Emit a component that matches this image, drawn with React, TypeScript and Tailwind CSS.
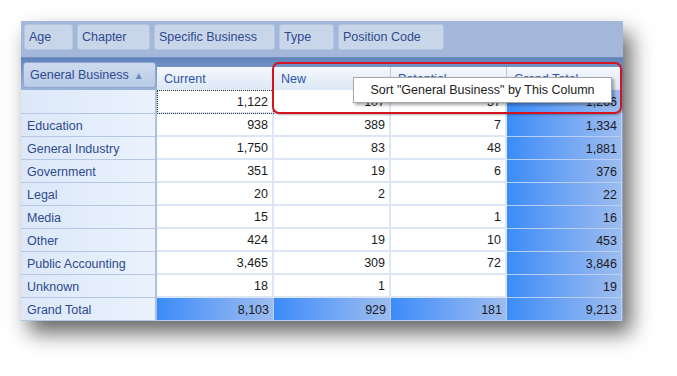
const FIELDS = ['Age', 'Chapter', 'Specific Business', 'Type', 'Position Code'];
const FIELD_W = ['w-[49px]', 'w-[73px]', 'w-[121px]', 'w-[55px]', 'w-[106px]'];

const COLS = ['Current', 'New', 'Potential', 'Grand Total'];
const COL_W = ['w-[117px]', 'w-[117px]', 'w-[116px]', 'w-[115px]'];

const ROWS: string[][] = [
  ['', '1,122', '107', '37', '1,266'],
  ['Education', '938', '389', '7', '1,334'],
  ['General Industry', '1,750', '83', '48', '1,881'],
  ['Government', '351', '19', '6', '376'],
  ['Legal', '20', '2', '', '22'],
  ['Media', '15', '', '1', '16'],
  ['Other', '424', '19', '10', '453'],
  ['Public Accounting', '3,465', '309', '72', '3,846'],
  ['Unknown', '18', '1', '', '19'],
  ['Grand Total', '8,103', '929', '181', '9,213'],
];

export default function App() {
  return (
    <div
      className="w-[677px] h-[376px] bg-white pl-[21px] pt-[21px] overflow-hidden"
      style={{ fontFamily: '"Liberation Sans", Arial, sans-serif' }}
    >
      <div className="relative w-[602px] bg-[#8fa9d3] shadow-[8px_12px_20px_rgba(0,0,0,0.6)]">
        {/* filter area */}
        <div className="h-[36px] bg-[#a2b7d9] flex items-start gap-[4px] pl-[3px] pt-[3px]">
          {FIELDS.map((f, i) => (
            <div
              key={f}
              className={`${FIELD_W[i]} h-[26px] rounded-[3px] bg-[#c9d6ea] border border-[#b5c6e1] flex items-center pl-[4px] text-[12.5px] text-[#2d4a8e]`}
            >
              {f}
            </div>
          ))}
        </div>

        {/* header band */}
        <div className="h-[33px] flex bg-gradient-to-b from-[#6283bc] via-[#7f9dcd] to-[#9ab3da] border-t border-[#6f8fc2]">
          <div className="w-[136px] pl-[2px] pt-[4px]">
            <div className="w-[133px] h-[26px] rounded-[3px] bg-gradient-to-b from-[#cedbee] to-[#b9cbe6] border border-[#8ea8d2] flex items-center pl-[6px] gap-[5px] text-[12.5px] text-[#2d4a8e]">
              General Business
              <span className="text-[10px] text-[#6a86b8]">▲</span>
            </div>
          </div>
          <div className="flex items-end">
            {COLS.map((c, i) => (
              <div
                key={c}
                className={`${COL_W[i]} h-[23px] bg-gradient-to-b from-[#f5f8fd] to-[#dce7f6] border-r border-[#b7c9e5] flex items-center pl-[7px] pt-[1px] text-[12.5px] text-[#2d55a6]`}
              >
                {c}
              </div>
            ))}
          </div>
        </div>

        {/* rows */}
        <div className="flex flex-col">
          {ROWS.map((r, ri) => {
            const totalRow = ri === ROWS.length - 1;
            return (
              <div key={ri} className={`flex ${ri === 0 ? 'h-[24px]' : 'h-[23px]'}`}>
                <div className="w-[136px] bg-gradient-to-r from-[#dce8f9] to-[#eaf2fd] border-r-2 border-b border-r-[#a9c0e2] border-b-[#b4c8e6] flex items-center pl-[6px] pt-[2px] text-[12.5px] text-[#2d4a8e]">
                  {r[0]}
                </div>
                {r.slice(1).map((v, ci) => {
                  const blue = totalRow || ci === 3;
                  const focus = ri === 0 && ci === 0;
                  return (
                    <div
                      key={ci}
                      className={`${COL_W[ci]} flex items-center justify-end pr-[4px] pt-[2px] text-[12.5px] text-[#1b1b1b] ${
                        blue
                          ? 'bg-gradient-to-r from-[#3a8bf8] to-[#9dbcef] border-r border-b border-[#b9cff3]'
                          : 'bg-white border-r-2 border-b-2 border-[#dce6f4]'
                      } ${focus ? 'outline-1 outline-dotted outline-[#333] -outline-offset-1' : ''}`}
                    >
                      {v}
                    </div>
                  );
                })}
              </div>
            );
          })}
        </div>

        {/* highlight box */}
        <div className="absolute left-[251px] top-[41px] w-[350px] h-[52px] rounded-[7px] border-[2.5px] border-[#d3141f] shadow-[1px_1px_2px_rgba(0,0,0,0.3)]" />

        {/* tooltip */}
        <div className="absolute left-[332px] top-[56px] w-[259px] h-[26px] bg-white border border-[#a7a7a7] shadow-[2px_2px_3px_rgba(0,0,0,0.35)] flex items-center justify-center text-[12.5px] text-[#222]">
          Sort "General Business" by This Column
        </div>
      </div>
    </div>
  );
}
